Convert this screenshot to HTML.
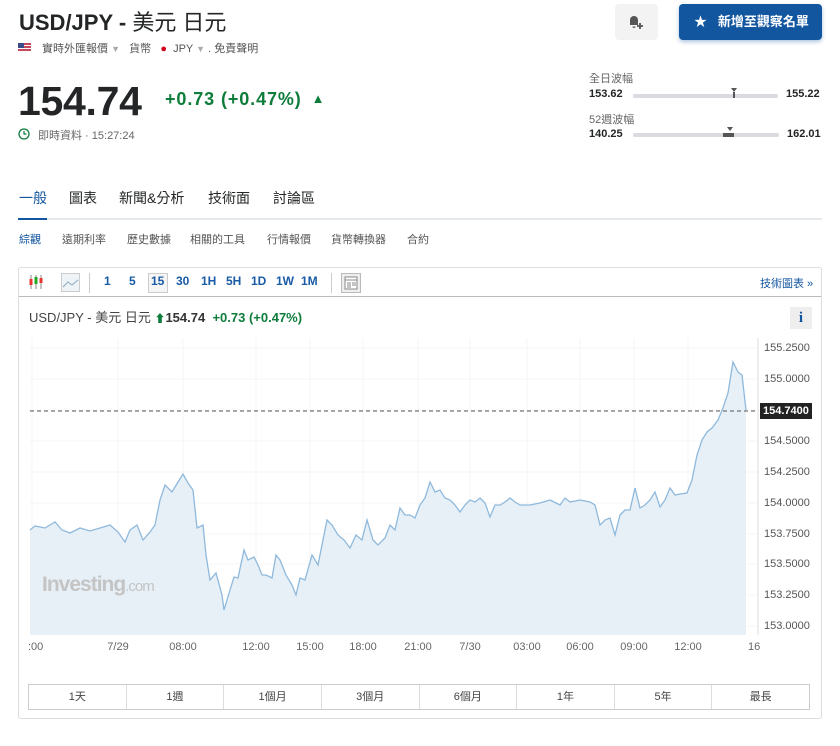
<!DOCTYPE html>
<html><head><meta charset="utf-8">
<style>
*{margin:0;padding:0;box-sizing:border-box}
body{width:840px;height:746px;background:#fff;font-family:"Liberation Sans","Noto Sans CJK TC",sans-serif;color:#232526;position:relative;overflow:hidden}
.a{position:absolute;white-space:nowrap}
.bar{position:absolute;height:4px;background:#d9dbe0;border-radius:2px}
.tf{position:absolute;top:274px;font-size:12px;font-weight:bold;color:#1a5ba6}
.ylab{position:absolute;left:764px;font-size:11px;color:#555}
.xlab{position:absolute;top:641px;font-size:11px;color:#666;transform:translateX(-50%)}
.sn{position:absolute;top:231px;font-size:11px;color:#555}
</style></head><body>
<div class="a" style="left:19px;top:5px;font-size:22px;font-weight:bold;color:#232526">USD/JPY - <span style="font-weight:normal">美元 日元</span></div>
<div class="a" style="left:18px;top:43px;width:13px;height:9px;background:repeating-linear-gradient(#c8465a 0 2px,#fff 2px 3px)"><div style="width:6px;height:5px;background:#3b4c8c"></div></div>
<div class="a" style="left:42px;top:40px;font-size:11px;color:#555">實時外匯報價 <span style="color:#aaa;font-size:9px">▼</span> &nbsp;&nbsp;貨幣 &nbsp;&nbsp;<span style="color:#d0021b">●</span> &nbsp;JPY <span style="color:#aaa;font-size:9px">▼</span> . 免責聲明</div>
<div class="a" style="left:18px;top:78px;font-size:41px;font-weight:bold;color:#232526;letter-spacing:-0.3px">154.74</div>
<div class="a" style="left:165px;top:89px;font-size:18px;font-weight:bold;color:#0e7d3c;letter-spacing:0.9px">+0.73 (+0.47%) <span style="font-size:13px;position:relative;top:-2px;margin-left:4px">▲</span></div>
<svg class="a" style="left:18px;top:128px" width="12" height="12" viewBox="0 0 12 12"><circle cx="6" cy="6" r="5" fill="none" stroke="#0e7d3c" stroke-width="1.3"/><path d="M6 3v3h2.5" fill="none" stroke="#0e7d3c" stroke-width="1.2"/></svg>
<div class="a" style="left:38px;top:127px;font-size:11px;color:#666">即時資料 · 15:27:24</div>
<div class="a" style="left:615px;top:4px;width:43px;height:36px;background:#f3f3f3;border-radius:4px"></div>
<svg class="a" style="left:627px;top:13px" width="18" height="18" viewBox="0 0 18 18"><path d="M3 12h8V7a4 4 0 0 0-8 0zM5.5 13.5a1.5 1.5 0 0 0 3 0" fill="#555"/><path d="M13 10v6M10 13h6" stroke="#555" stroke-width="1.8"/></svg>
<div class="a" style="left:679px;top:4px;width:143px;height:36px;background:#1256a0;border-radius:4px;box-shadow:0 2px 4px rgba(18,86,160,.35);color:#fff;font-size:13px;font-weight:bold;line-height:36px;padding-left:15px">★ &nbsp;&nbsp;新增至觀察名單</div>
<div class="a" style="left:589px;top:70px;font-size:11px;color:#666">全日波幅</div>
<div class="a" style="left:589px;top:88px;font-size:11px;font-weight:bold">153.62</div>
<div class="bar" style="left:633px;top:94px;width:145px"></div>
<div class="a" style="left:731px;top:88px;width:6px;height:4px;background:#555;clip-path:polygon(0 0,100% 0,50% 100%)"></div>
<div class="a" style="left:733px;top:92px;width:2px;height:6px;background:#555"></div>
<div class="a" style="left:786px;top:88px;font-size:11px;font-weight:bold">155.22</div>
<div class="a" style="left:589px;top:111px;font-size:11px;color:#666">52週波幅</div>
<div class="a" style="left:589px;top:128px;font-size:11px;font-weight:bold">140.25</div>
<div class="bar" style="left:633px;top:133px;width:146px"></div>
<div class="a" style="left:727px;top:127px;width:6px;height:4px;background:#555;clip-path:polygon(0 0,100% 0,50% 100%)"></div>
<div class="a" style="left:723px;top:133px;width:11px;height:4px;background:#555"></div>
<div class="a" style="left:787px;top:128px;font-size:11px;font-weight:bold">162.01</div>
<div class="a" style="left:19px;top:188px;font-size:14px;color:#1256a0">一般</div>
<div class="a" style="left:69px;top:188px;font-size:14px;color:#232526">圖表</div>
<div class="a" style="left:119px;top:188px;font-size:14px;color:#232526">新聞&amp;分析</div>
<div class="a" style="left:208px;top:188px;font-size:14px;color:#232526">技術面</div>
<div class="a" style="left:273px;top:188px;font-size:14px;color:#232526">討論區</div>
<div class="a" style="left:18px;top:218px;width:804px;height:2px;background:#e6e9eb"></div>
<div class="a" style="left:18px;top:218px;width:29px;height:2px;background:#1256a0"></div>
<div class="sn" style="left:19px;color:#1256a0">綜觀</div>
<div class="sn" style="left:62px">遠期利率</div>
<div class="sn" style="left:127px">歷史數據</div>
<div class="sn" style="left:190px">相關的工具</div>
<div class="sn" style="left:267px">行情報價</div>
<div class="sn" style="left:331px">貨幣轉換器</div>
<div class="sn" style="left:407px">合約</div>
<div class="a" style="left:18px;top:267px;width:804px;height:452px;border:1px solid #ddd;border-radius:3px"></div>
<div class="a" style="left:19px;top:296px;width:802px;height:1px;background:#bbb"></div>
<svg class="a" style="left:28px;top:274px" width="18" height="16" viewBox="0 0 18 16"><path d="M3 1v14M8 1v14M13 1v14" stroke="#888"/><rect x="1.5" y="5" width="3" height="6" fill="#e33"/><rect x="6.5" y="3" width="3" height="7" fill="#2a2"/><rect x="11.5" y="4" width="3" height="5" fill="#e33"/></svg>
<div class="a" style="left:61px;top:273px;width:19px;height:19px;border:1px solid #ccc;background:#eef3f8"><svg width="17" height="17"><path d="M1 13L6 8l4 3 6-5" stroke="#8ab" fill="none"/></svg></div>
<div class="a" style="left:89px;top:273px;width:1px;height:20px;background:#ccc"></div>
<div class="tf" style="left:104px">1</div><div class="tf" style="left:129px">5</div>
<div class="a" style="left:148px;top:273px;width:20px;height:20px;border:1px solid #ccc;background:#f5f5f5"></div>
<div class="tf" style="left:151px">15</div><div class="tf" style="left:176px">30</div><div class="tf" style="left:201px">1H</div><div class="tf" style="left:226px">5H</div><div class="tf" style="left:251px">1D</div><div class="tf" style="left:276px">1W</div><div class="tf" style="left:301px">1M</div>
<div class="a" style="left:331px;top:273px;width:1px;height:20px;background:#ccc"></div>
<div class="a" style="left:341px;top:273px;width:20px;height:20px;border:1px solid #bbb;background:#eee"><svg width="18" height="18"><rect x="3" y="3" width="12" height="12" fill="#fff" stroke="#888"/><path d="M3 6h12M5 9h4M5 11h4M5 13h4M10 9h4M10 11h4" stroke="#888"/></svg></div>
<div class="a" style="left:760px;top:275px;font-size:11px;color:#1256a0">技術圖表 »</div>
<div class="a" style="left:29px;top:307px;font-size:13px;color:#444">USD/JPY - 美元 日元 <span style="color:#0e7d3c;font-size:11px">⬆</span><b style="color:#333">154.74</b> &nbsp;<b style="color:#0e7d3c;font-weight:bold">+0.73 (+0.47%)</b></div>
<div class="a" style="left:790px;top:307px;width:22px;height:22px;background:#eee;color:#1256a0;font:bold 15px 'Liberation Serif',serif;text-align:center;line-height:22px">i</div>
<svg class="a" style="left:0;top:0" width="840" height="746">
<g stroke="#f4f4f4" stroke-width="1">
<path d="M32 338V635M118 338V635M183 338V635M256 338V635M310 338V635M363 338V635M418 338V635M470 338V635M527 338V635M580 338V635M634 338V635M688 338V635"/>
<path d="M30 348H758M30 379H758M30 410H758M30 441H758M30 472H758M30 503H758M30 534H758M30 564H758M30 595H758M30 626H758"/>
</g>
<path d="M758 338V635" stroke="#ddd"/>
<path d="M30 530L35 526L45 528L55 522L62 530L70 533L80 528L90 531L100 528L110 525L118 532L125 542L130 530L137 525L143 540L150 532L155 525L160 500L165 485L172 492L178 482L183 474L188 483L193 490L197 528L203 525L206 555L210 580L216 573L222 595L224 610L230 590L234 577L238 578L244 550L248 560L254 557L258 565L262 575L266 575L272 578L276 555L280 560L286 575L292 585L296 595L300 578L305 580L312 555L318 565L322 545L327 520L332 525L338 535L344 540L350 548L356 535L362 540L367 520L373 540L378 545L385 538L390 525L395 530L400 508L405 515L410 515L415 518L420 505L425 498L430 482L435 492L440 490L445 498L450 500L455 505L460 512L465 505L470 500L475 502L480 498L485 503L490 517L495 505L500 505L505 502L510 498L515 502L520 505L530 505L540 503L550 500L560 505L565 498L570 502L580 500L590 502L595 505L600 525L605 520L610 518L615 535L620 515L625 510L630 510L635 488L640 508L645 505L650 500L655 492L660 507L665 500L670 488L675 495L680 494L687 493L692 480L697 455L702 440L707 432L712 428L718 420L723 408L728 393L733 362L738 372L742 375L746 410L746 635L30 635Z" fill="#e3edf6" fill-opacity="0.85"/>
<path d="M30 530L35 526L45 528L55 522L62 530L70 533L80 528L90 531L100 528L110 525L118 532L125 542L130 530L137 525L143 540L150 532L155 525L160 500L165 485L172 492L178 482L183 474L188 483L193 490L197 528L203 525L206 555L210 580L216 573L222 595L224 610L230 590L234 577L238 578L244 550L248 560L254 557L258 565L262 575L266 575L272 578L276 555L280 560L286 575L292 585L296 595L300 578L305 580L312 555L318 565L322 545L327 520L332 525L338 535L344 540L350 548L356 535L362 540L367 520L373 540L378 545L385 538L390 525L395 530L400 508L405 515L410 515L415 518L420 505L425 498L430 482L435 492L440 490L445 498L450 500L455 505L460 512L465 505L470 500L475 502L480 498L485 503L490 517L495 505L500 505L505 502L510 498L515 502L520 505L530 505L540 503L550 500L560 505L565 498L570 502L580 500L590 502L595 505L600 525L605 520L610 518L615 535L620 515L625 510L630 510L635 488L640 508L645 505L650 500L655 492L660 507L665 500L670 488L675 495L680 494L687 493L692 480L697 455L702 440L707 432L712 428L718 420L723 408L728 393L733 362L738 372L742 375L746 410" fill="none" stroke="#8fb9dc" stroke-width="1.3"/>
<path d="M30 411H758" stroke="#555" stroke-dasharray="4 3"/>
<text x="42" y="591" font-family="Liberation Sans" font-weight="bold" font-size="21" fill="#c4c4c4" letter-spacing="-1">Investing<tspan font-weight="normal" font-size="15">.com</tspan></text>
</svg>
<div class="ylab" style="top:342px">155.2500</div>
<div class="ylab" style="top:373px">155.0000</div>
<div class="a" style="left:760px;top:403px;width:52px;height:16px;background:#222;color:#fff;font-size:11px;font-weight:bold;line-height:16px;padding-left:3px">154.7400</div>
<div class="ylab" style="top:435px">154.5000</div>
<div class="ylab" style="top:466px">154.2500</div>
<div class="ylab" style="top:497px">154.0000</div>
<div class="ylab" style="top:528px">153.7500</div>
<div class="ylab" style="top:558px">153.5000</div>
<div class="ylab" style="top:589px">153.2500</div>
<div class="ylab" style="top:620px">153.0000</div>
<div class="a" style="left:28px;top:641px;font-size:11px;color:#666">:00</div>
<div class="xlab" style="left:118px">7/29</div><div class="xlab" style="left:183px">08:00</div><div class="xlab" style="left:256px">12:00</div><div class="xlab" style="left:310px">15:00</div><div class="xlab" style="left:363px">18:00</div><div class="xlab" style="left:418px">21:00</div><div class="xlab" style="left:470px">7/30</div><div class="xlab" style="left:527px">03:00</div><div class="xlab" style="left:580px">06:00</div><div class="xlab" style="left:634px">09:00</div><div class="xlab" style="left:688px">12:00</div>
<div class="a" style="left:748px;top:641px;font-size:11px;color:#666">16</div>
<div class="a" style="left:28px;top:684px;width:782px;height:26px;border:1px solid #ccc;display:flex;font-size:11px;color:#444">
<div style="flex:1;text-align:center;line-height:24px;border-right:1px solid #ddd">1天</div><div style="flex:1;text-align:center;line-height:24px;border-right:1px solid #ddd">1週</div><div style="flex:1;text-align:center;line-height:24px;border-right:1px solid #ddd">1個月</div><div style="flex:1;text-align:center;line-height:24px;border-right:1px solid #ddd">3個月</div><div style="flex:1;text-align:center;line-height:24px;border-right:1px solid #ddd">6個月</div><div style="flex:1;text-align:center;line-height:24px;border-right:1px solid #ddd">1年</div><div style="flex:1;text-align:center;line-height:24px;border-right:1px solid #ddd">5年</div><div style="flex:1;text-align:center;line-height:24px">最長</div>
</div>
</body></html>
